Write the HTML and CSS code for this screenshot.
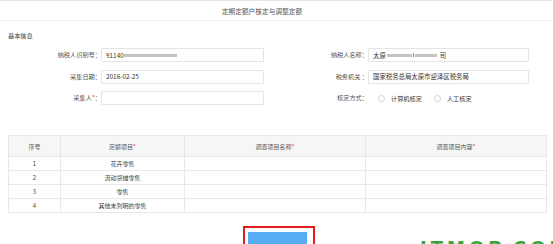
FILE: index.html
```html
<!DOCTYPE html>
<html lang="zh-CN">
<head>
    <meta charset="UTF-8">
    <title>定期定额户核定与调整定额</title>
    <link rel="stylesheet" href="styles.css">
</head>
<body>
<div class="page-head">定期定额户核定与调整定额</div>
<div class="section-title">基本信息</div>
<div class="info-form">
    <label class="form-label">纳税人识别号：</label>
    <div class="form-input">91140<span class="mask mask-id"></span></div>
    <label class="form-label">纳税人名称：</label>
    <div class="form-input">太原<span class="mask mask-a"></span><span class="mask-tick"></span><span class="mask mask-b"></span>司</div>

    <label class="form-label">采集日期：</label>
    <div class="form-input">2016-02-25</div>
    <label class="form-label">税务机关 ：</label>
    <div class="form-input">国家税务总局太原市迎泽区税务局</div>

    <label class="form-label">采集人<i class="req">*</i>：</label>
    <div class="form-input"></div>
    <label class="form-label">核定方式：</label>
    <div class="radio-group">
        <span class="radio"></span><span class="radio-text">计算机核定</span>
        <span class="radio"></span><span class="radio-text">人工核定</span>
    </div>
</div>

<table class="quota-table">
    <thead>
    <tr>
        <th class="col-no">序号</th>
        <th class="col-item">定额项目<i class="req">*</i></th>
        <th class="col-name">调查项目名称<i class="req">*</i></th>
        <th>调查项目内容<i class="req">*</i></th>
    </tr>
    </thead>
    <tbody>
    <tr><td>1</td><td>花卉零售</td><td></td><td></td></tr>
    <tr><td>2</td><td>流动货摊零售</td><td></td><td></td></tr>
    <tr><td>3</td><td>零售</td><td></td><td></td></tr>
    <tr><td>4</td><td>其他未列明的零售</td><td></td><td></td></tr>
    </tbody>
</table>

<div class="btn-row">
    <div class="btn-mark"><div class="btn-blue"></div></div>
</div>

<div class="watermark">ITMOP.COM</div>
</body>
</html>
```

FILE: styles.css
```css
*{
    margin: 0;
    padding: 0;
    box-sizing: border-box;
}
html,body{
    width: 100%;
    height: 100%;
}
body{
    position: relative;
    overflow: hidden;
    background: #fff;
    color: #444;
    font-family: "Noto Sans CJK SC", "Open Sans", sans-serif;
    font-size: 6.2px;
}
.req{
    font-style: normal;
    color: #e33;
}
.page-head{
    height: 21px;
    line-height: 21px;
    padding-right: 29px;
    border-top: 1px solid #e6e6e6;
    border-bottom: 1px solid #eee;
    text-align: center;
    font-size: 6.7px;
    color: #555;
}
.section-title{
    padding: 11px 8px 0;
    line-height: 8px;
    color: #333;
}
.info-form{
    display: grid;
    grid-template-columns: 93px 163px 104px 161px;
    grid-auto-rows: 14px;
    row-gap: 7.5px;
    margin: 8px 0 0 8px;
}
.form-label{
    line-height: 14px;
    text-align: right;
    color: #555;
}
.form-input{
    display: flex;
    align-items: center;
    padding-left: 4px;
    border: 1px solid #e4e4e4;
    border-radius: 1px;
    color: #333;
    font-size: 6.4px;
    white-space: nowrap;
}
.mask{
    display: inline-block;
    height: 3px;
    background: #c4c4c4;
}
.mask-id{
    width: 53px;
}
.mask-a{
    width: 25px;
    margin-left: 1px;
}
.mask-tick{
    display: inline-block;
    width: 1px;
    height: 4px;
    margin: 0 1px;
    background: #888;
}
.mask-b{
    width: 22px;
    margin-right: 3px;
}
.radio-group{
    display: flex;
    align-items: center;
    padding-left: 10px;
    color: #333;
}
.radio{
    width: 7px;
    height: 7px;
    border: 1px solid #cfcfcf;
    border-radius: 50%;
}
.radio-text{
    margin: 0 12px 0 6px;
}
.quota-table{
    width: 539px;
    margin: 30px 0 0 8px;
    border-collapse: collapse;
    font-size: 6px;
    color: #444;
}
.quota-table th,.quota-table td{
    border: 1px solid #e8e8e8;
    text-align: center;
    font-weight: normal;
}
.quota-table th{
    height: 21px;
    background: #f6f6f6;
    color: #555;
}
.quota-table td{
    height: 14px;
}
.col-no{
    width: 52px;
}
.col-item{
    width: 124px;
}
.col-name{
    width: 181px;
}
.btn-row{
    display: flex;
    justify-content: center;
    padding-left: 5px;
    margin-top: 13px;
}
.btn-mark{
    width: 72px;
    height: 24px;
    padding: 4px 6px 0 3px;
    border: 2px solid #e21c1c;
}
.btn-blue{
    height: 20px;
    background: #58aef2;
}
.watermark{
    position: absolute;
    left: 420px;
    top: 237px;
    font-family: "DejaVu Sans", sans-serif;
    font-weight: bold;
    font-size: 18px;
    letter-spacing: 4px;
    color: #3aa33a;
}
```
